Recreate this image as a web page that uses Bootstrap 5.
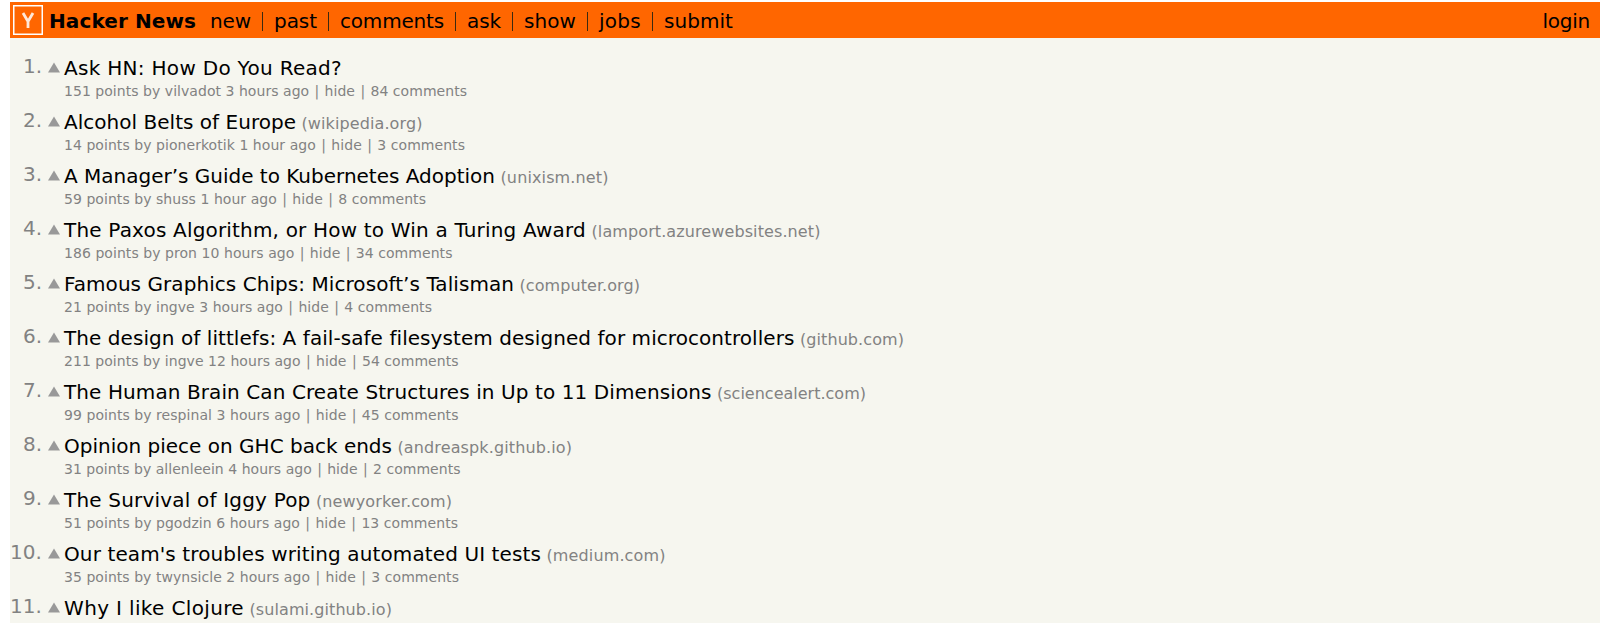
<!DOCTYPE html>
<html lang="en">
<head>
<meta charset="utf-8">
<title>Hacker News</title>
<link href="https://cdn.jsdelivr.net/npm/bootstrap@5.3.0/dist/css/bootstrap.min.css" rel="stylesheet">
<style>
body{background:#fff;font-family:Verdana,"DejaVu Sans",sans-serif;font-size:20px;line-height:24px;color:#000;height:100vh;overflow:hidden}
a{color:inherit;text-decoration:none}
.page-wrap{margin:2px 5px 0 10px;background:#f6f6ef;min-height:621px}
.topbar{background:#f60;height:36px;padding:0 10px 0 3px}
.topbar a{padding-top:1px}
.logo{display:block;width:30px;height:30px;margin-right:6px}
.brand{margin-right:14px}
[data-w]{display:inline-block;white-space:pre}
.bar{width:1px;height:19px;margin:2px 11px 0;background:#3b2a10}
#stories{padding-top:18px}
.story{height:54px}
.rank{width:32px;color:#828282;line-height:20px;direction:rtl}
.vote{width:12px;height:11px;margin:6px 4px 0 6px}
.headline{height:26px}
.site{font-size:16px;color:#828282;margin-left:5.5px}
.sub{font-size:14px;line-height:18px;color:#828282}
.sep{margin:0 .85px}
</style>
</head>
<body>
<div class="page-wrap">
<nav class="topbar d-flex align-items-center">
<svg class="logo" viewBox="0 0 30 30"><rect x=".75" y=".75" width="28.5" height="28.5" fill="#f60" stroke="#fff" stroke-width="1.5"/><path d="M10 8l5 8.500L20 8M15 15.500v7.500" fill="none" stroke="#fff" stroke-opacity=".85" stroke-width="2.800"/></svg>
<a href="#" class="brand fw-bold" data-w="147">Hacker News</a>
<div class="d-flex align-items-center">
<a href="#" data-w="41">new</a><i class="bar"></i><a href="#" data-w="43">past</a><i class="bar"></i><a href="#" data-w="104">comments</a><i class="bar"></i><a href="#" data-w="34">ask</a><i class="bar"></i><a href="#" data-w="52">show</a><i class="bar"></i><a href="#" data-w="42">jobs</a><i class="bar"></i><a href="#" data-w="69">submit</a>
</div>
<a href="#" class="ms-auto" data-w="47.5">login</a>
</nav>
<main id="stories"></main>
</div>
<script src="https://cdn.jsdelivr.net/npm/bootstrap@5.3.0/dist/js/bootstrap.bundle.min.js"></script>
<script>
// title, title width, site, site width, subtext, subtext width
const stories = [
["Ask HN: How Do You Read?",278,"",0,"151 points by vilvadot 3 hours ago | hide | 84 comments",403],
["Alcohol Belts of Europe",232,"wikipedia.org",121,"14 points by pionerkotik 1 hour ago | hide | 3 comments",401],
["A Manager’s Guide to Kubernetes Adoption",431,"unixism.net",108,"59 points by shuss 1 hour ago | hide | 8 comments",362],
["The Paxos Algorithm, or How to Win a Turing Award",522,"lamport.azurewebsites.net",229,"186 points by pron 10 hours ago | hide | 34 comments",388.5],
["Famous Graphics Chips: Microsoft’s Talisman",450,"computer.org",120.5,"21 points by ingve 3 hours ago | hide | 4 comments",368],
["The design of littlefs: A fail-safe filesystem designed for microcontrollers",730.5,"github.com",104,"211 points by ingve 12 hours ago | hide | 54 comments",394.5],
["The Human Brain Can Create Structures in Up to 11 Dimensions",647.5,"sciencealert.com",149,"99 points by respinal 3 hours ago | hide | 45 comments",394.5],
["Opinion piece on GHC back ends",328,"andreaspk.github.io",174.5,"31 points by allenleein 4 hours ago | hide | 2 comments",396.5],
["The Survival of Iggy Pop",246.5,"newyorker.com",136,"51 points by pgodzin 6 hours ago | hide | 13 comments",394],
["Our team's troubles writing automated UI tests",477,"medium.com",119,"35 points by twynsicle 2 hours ago | hide | 3 comments",395],
["Why I like Clojure",180,"sulami.github.io",142.5,"",0]
];
document.getElementById('stories').innerHTML = stories.map(([t,tw,s,sw,u,uw],i)=>`
<article class="story d-flex"><div class="rank"><span dir="ltr" data-w="${i>8?32:19}">${i+1}.</span></div>
<svg class="vote" viewBox="0 0 12 11"><path d="M6 .5L12 10.500H0z" fill="#999"/></svg>
<div class="text-nowrap"><div class="headline d-flex align-items-baseline"><a href="#" data-w="${tw}">${t}</a>${s?`<a href="#" class="site" data-w="${sw}">(${s})</a>`:''}</div>
${u?`<div class="sub"><span data-w="${uw}">${u.replaceAll('|','<span class="sep">|</span>')}</span></div>`:''}</div></article>`).join('');
document.querySelectorAll('[data-w]').forEach(e=>{
  const w=+e.dataset.w, n=e.textContent.length;
  e.style.letterSpacing=(w-e.getBoundingClientRect().width)/n+'px';
});
</script>
</body>
</html>
